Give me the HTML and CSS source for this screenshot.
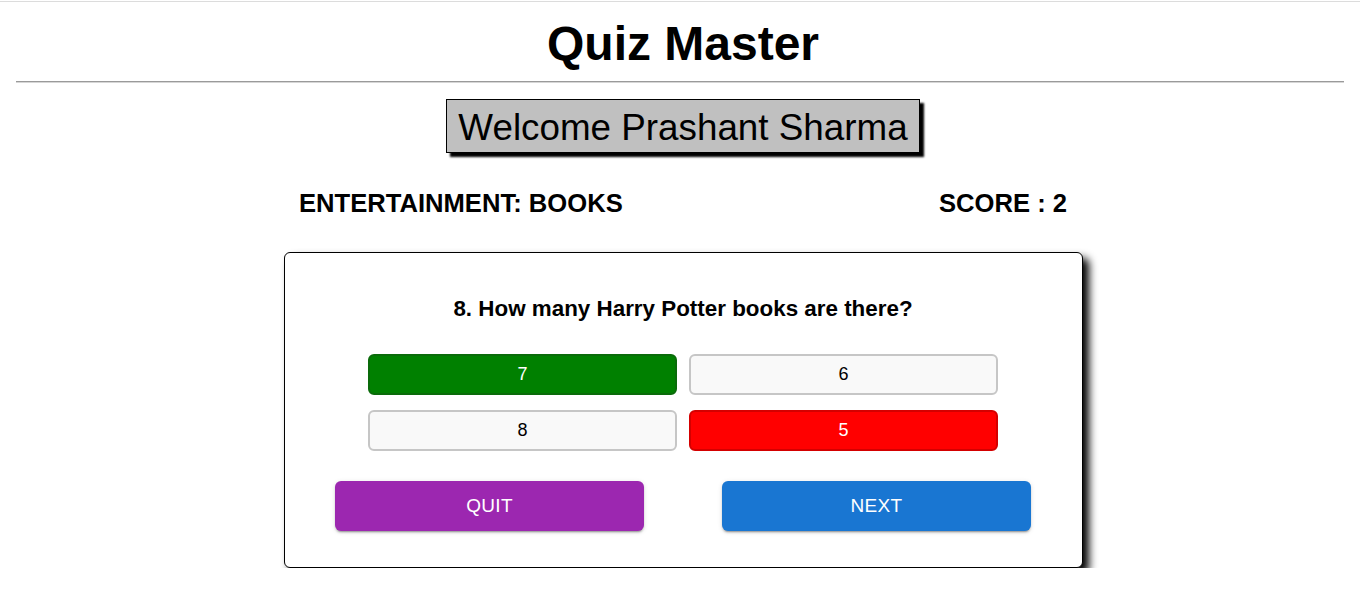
FILE: index.html
```html
<!DOCTYPE html>
<html lang="en">
<head>
<meta charset="utf-8">
<title>Quiz Master</title>
<link rel="stylesheet" href="styles.css">
</head>
<body>
<div class="topline"></div>
<h1 class="title shift">Quiz Master</h1>
<hr class="rule">
<main class="main shift">
  <div class="welcome-wrap">
    <div class="welcome">Welcome Prashant Sharma</div>
  </div>
  <div class="info-row">
    <span class="info">ENTERTAINMENT: BOOKS</span>
    <span class="info">SCORE : 2</span>
  </div>
  <section class="card">
    <h2 class="question">8. How many Harry Potter books are there?</h2>
    <div class="options">
      <button class="opt opt-correct">7</button>
      <button class="opt">6</button>
      <button class="opt">8</button>
      <button class="opt opt-wrong">5</button>
    </div>
    <div class="actions">
      <button class="act act-quit">QUIT</button>
      <button class="act act-next">NEXT</button>
    </div>
  </section>
</main>
</body>
</html>
```

FILE: styles.css
```css
html, body {
  margin: 0;
  padding: 0;
  background: #fff;
}

body {
  font-family: "Liberation Sans", Arial, sans-serif;
  color: #000;
}

.topline {
  height: 1px;
  margin-top: 1px;
  background: #dcdcdc;
}

.shift {
  padding-left: 6px;
}

.title {
  margin: 14px 0 0 0;
  font-size: 48px;
  font-weight: bold;
  line-height: 1.15;
  text-align: center;
}

.rule {
  margin: 10px 16px 0 16px;
  height: 0;
  border: 0;
  border-top: 1px solid #9a9a9a;
  border-bottom: 1px solid #d6d6d6;
}

.main {
  display: flex;
  flex-direction: column;
  align-items: center;
}

.welcome-wrap {
  margin-top: 16px;
  display: flex;
  justify-content: center;
}

.welcome {
  background: #c0c0c0;
  border: 1px solid #000;
  box-shadow: 4px 4px 2px #000;
  font-size: 36.8px;
  line-height: 1.15;
  padding: 7px 11px 2px 11px;
}

.info-row {
  width: 768px;
  margin-top: 36px;
  display: flex;
  justify-content: space-between;
}

.info {
  font-size: 25.6px;
  font-weight: bold;
  line-height: 1.15;
}

.card {
  box-sizing: border-box;
  width: 799px;
  margin-top: 34px;
  border: 1px solid #000;
  border-radius: 6px;
  background: #fff;
  box-shadow: 6px 6px 8px #000;
  padding: 0 0 36px 0;
  display: flex;
  flex-direction: column;
  align-items: center;
}

.question {
  margin: 43px 0 0 0;
  font-size: 22.4px;
  font-weight: bold;
  line-height: 1.15;
  text-align: center;
}

.options {
  margin-top: 32px;
  display: grid;
  grid-template-columns: 309px 309px;
  column-gap: 12px;
  row-gap: 15px;
}

.opt {
  height: 41px;
  box-sizing: border-box;
  border: 2px solid #c6c6c6;
  border-radius: 6px;
  background: #f9f9f9;
  color: #000;
  font-family: "Liberation Sans", Arial, sans-serif;
  font-size: 18px;
  padding: 0;
}

.opt-correct {
  background: #008000;
  border-color: #0a6b0a;
  color: #fff;
}

.opt-wrong {
  background: #ff0000;
  border-color: #d40000;
  color: #fff;
}

.actions {
  margin-top: 30px;
  display: flex;
  justify-content: center;
  gap: 78px;
}

.act {
  width: 309px;
  height: 50px;
  border: 0;
  border-radius: 6px;
  color: #fff;
  font-family: "Liberation Sans", Arial, sans-serif;
  font-size: 19px;
  letter-spacing: 0.3px;
  padding: 0;
  box-shadow: 0 3px 1px -2px rgba(0, 0, 0, 0.2), 0 2px 2px 0 rgba(0, 0, 0, 0.14), 0 1px 5px 0 rgba(0, 0, 0, 0.12);
}

.act-quit {
  background: #9c27b0;
}

.act-next {
  background: #1976d2;
}
```
